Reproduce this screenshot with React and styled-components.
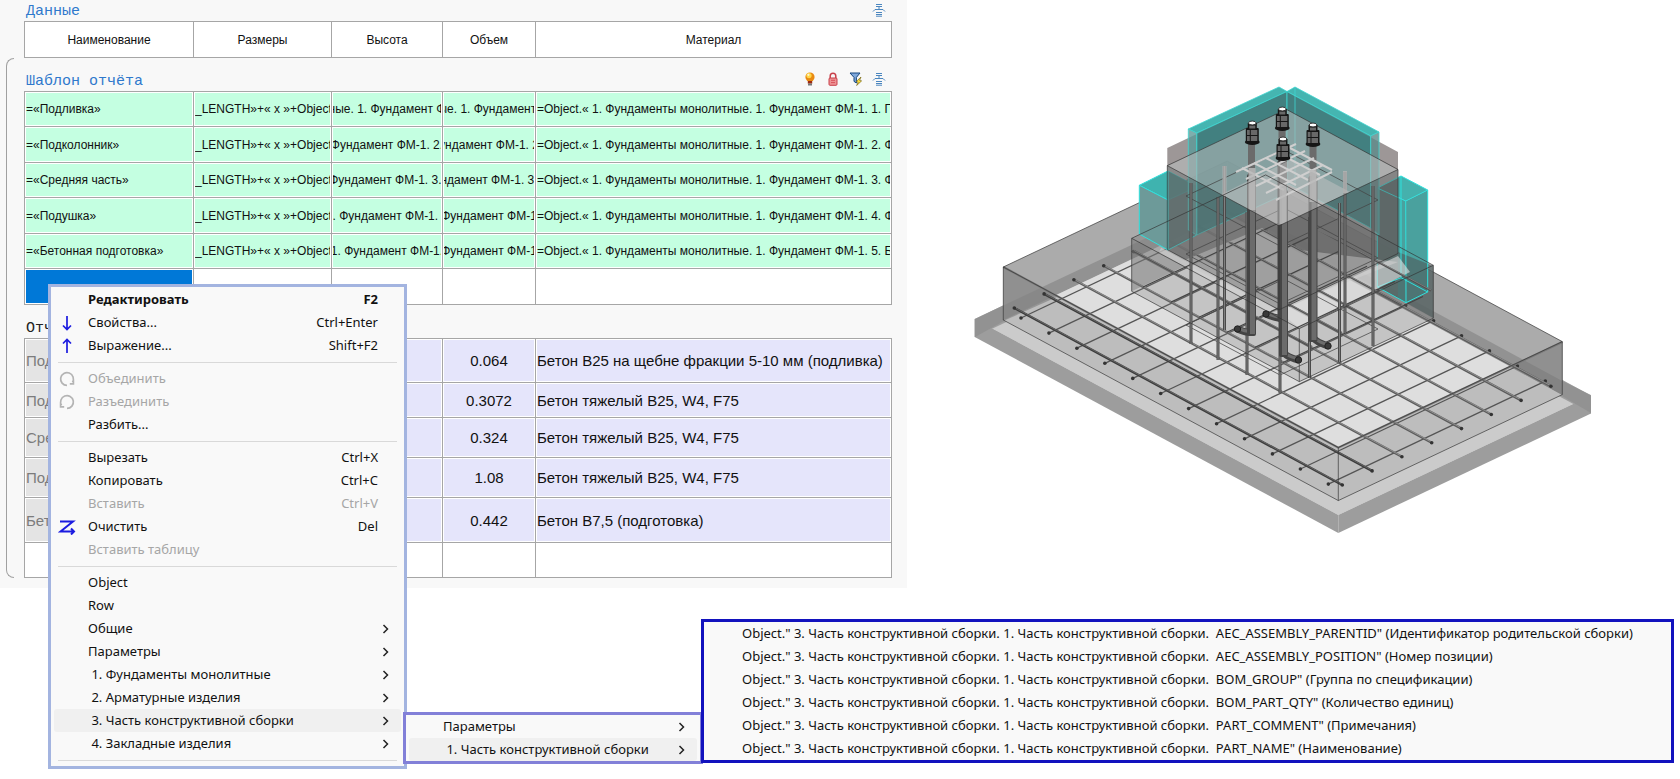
import React from 'react';
import styled, { createGlobalStyle } from 'styled-components';

const GlobalStyle = createGlobalStyle`
    body{
        margin: 0;
        background: #fff;
        font-family: "Liberation Sans", Arial, sans-serif;
    }
    *{
        box-sizing: border-box;
    }
`;

const LayoutPage = styled.main`
    position: relative;
    display: grid;
    grid-template-columns: 907fr 773fr;
    align-items: start;
    min-height: 100vh;
    overflow: hidden;
`;

const LayoutPanel = styled.section`
    background: #f8f8f8;
    padding: 0 15px 10px 6px;
`;

const LayoutSection = styled.div`
    padding-left: 18px;
`;

const LayoutGroup = styled.div`
    display: grid;
    grid-template-columns: 8px minmax(0, 1fr);
    column-gap: 10px;
`;

const Bracket = styled.div`
    border: 1px solid #a0a0a0;
    border-right: 0;
    border-radius: 8px 0 0 8px;
`;

const TitleRow = styled.header`
    display: flex;
    align-items: center;
    justify-content: space-between;
    height: ${p => (p.$first ? 21 : 22)}px;
    margin-top: ${p => (p.$first ? 0 : 11)}px;
    padding: 0 6px 0 2px;
`;

const Title = styled.h2`
    margin: 0;
    padding-top: 3px;
    font: 400 15px/18px "Liberation Mono", monospace;
    color: ${p => (p.$dark ? '#222' : '#2f78cc')};
`;

const Tools = styled.div`
    display: flex;
    gap: 9px;
    padding-bottom: 2px;
`;

const ToolButton = styled.button`
    display: block;
    width: 14px;
    height: 14px;
    padding: 0;
    border: 0;
    background: none;
    svg{
        display: block;
    }
`;

const Table = styled.table`
    width: 100%;
    table-layout: fixed;
    border-collapse: collapse;
    font-size: ${p => p.$size || 12}px;
    color: #111;
`;

const HeadCell = styled.th`
    height: 36px;
    padding: 0;
    border: 1px solid #a6a6a6;
    background: #fff;
    font-weight: 400;
`;

const fills = {
    formula: '#c4ffe1',
    value: '#e5e5fb',
    label: '#e4e4e4',
    empty: '#fff',
    selected: '#0078d7',
};

const Cell = styled.td`
    height: ${p => p.$height}px;
    padding: 0 1px;
    border: 1px solid #a6a6a6;
    background: ${p => fills[p.$kind]};
    box-shadow: inset 0 0 0 1px #fff;
    color: ${p => (p.$kind === 'label' ? '#7c7c7c' : 'inherit')};
`;

const CellText = styled.div`
    display: flex;
    justify-content: ${p => p.$align || 'flex-start'};
    overflow: hidden;
    white-space: pre;
`;

const LayoutScene = styled.section`
    padding: 70px 60px 0 53px;
    svg{
        display: block;
        width: 100%;
    }
`;

const Menu = styled.ul`
    position: absolute;
    margin: 0;
    padding: 0 3px;
    list-style: none;
    background: #f9f9f9;
    font: 13px/23px "Noto Sans", "Open Sans", sans-serif;
    color: #111;
`;

const ContextMenu = styled(Menu)`
    left: 48px;
    top: 284px;
    width: 359px;
    padding-top: 1px;
    padding-bottom: 1px;
    border: 3px solid #a3b4e0;
`;

const GroupMenu = styled(Menu)`
    left: 403px;
    top: 712px;
    width: 300px;
    border: 3px solid #8280d8;
`;

const PropertyMenu = styled(Menu)`
    left: 701px;
    right: 6px;
    top: 619px;
    border: 3px solid #1212be;
`;

const MenuItem = styled.button`
    display: grid;
    grid-template-columns: ${p => p.$lead || 34}px 1fr auto;
    align-items: center;
    width: 100%;
    height: 23px;
    padding: 0 ${p => (p.$arrow ? 11 : 23)}px 0 0;
    border: 0;
    border-radius: 3px;
    background: ${p => (p.$active ? '#f0f0f0' : 'none')};
    font: inherit;
    font-weight: ${p => (p.$bold ? 700 : 400)};
    color: inherit;
    text-align: left;
    white-space: pre;
    &:disabled{
        color: #a6a6a6;
    }
    svg{
        display: block;
    }
`;

const IconSlot = styled.span`
    padding-left: 4px;
`;

const Separator = styled.li`
    height: 10px;
    padding: 5px 4px 0;
    &:after{
        content: '';
        display: block;
        height: 1px;
        background: #d9d9d9;
    }
`;

const columns = ['Наименование', 'Размеры', 'Высота', 'Объем', 'Материал'];

const sizeText = '_LENGTH»+« x »+Object.«';
const materialText = '=Object.« 1. Фундаменты монолитные. 1. Фундамент ФМ-1. ';

const template = [
    ['=«Подливка»', 'ные. 1. Фундамент Ф', 'ые. 1. Фундамент ', '1. Подливка'],
    ['=«Подколонник»', 'Фундамент ФМ-1. 2.', 'ундамент ФМ-1. 2', '2. Фундамент'],
    ['=«Средняя часть»', 'Фундамент ФМ-1. 3. ', 'ндамент ФМ-1. 3.', '3. Фундамент'],
    ['=«Подушка»', '. Фундамент ФМ-1. ', 'Фундамент ФМ-1', '4. Фундамент'],
    ['=«Бетонная подготовка»', '1. Фундамент ФМ-1.', 'Фундамент ФМ-1', '5. Бетонная'],
];

const report = [
    { name: 'Подливка', volume: '0.064', material: 'Бетон B25 на щебне фракции 5-10 мм (подливка)', height: 44 },
    { name: 'Подколонник', volume: '0.3072', material: 'Бетон тяжелый B25, W4, F75', height: 35 },
    { name: 'Средняя часть', volume: '0.324', material: 'Бетон тяжелый B25, W4, F75', height: 40 },
    { name: 'Подушка', volume: '1.08', material: 'Бетон тяжелый B25, W4, F75', height: 40 },
    { name: 'Бетонная подготовка', volume: '0.442', material: 'Бетон B7,5 (подготовка)', height: 45 },
];

const menu = [
    { text: 'Редактировать', hint: 'F2', bold: true },
    { text: 'Свойства...', hint: 'Ctrl+Enter', icon: 'down' },
    { text: 'Выражение...', hint: 'Shift+F2', icon: 'up' },
    null,
    { text: 'Объединить', icon: 'merge', disabled: true },
    { text: 'Разъединить', icon: 'split', disabled: true },
    { text: 'Разбить...' },
    null,
    { text: 'Вырезать', hint: 'Ctrl+X' },
    { text: 'Копировать', hint: 'Ctrl+C' },
    { text: 'Вставить', hint: 'Ctrl+V', disabled: true },
    { text: 'Очистить', hint: 'Del', icon: 'clear' },
    { text: 'Вставить таблицу', disabled: true },
    null,
    { text: 'Object' },
    { text: 'Row' },
    { text: 'Общие', arrow: true },
    { text: 'Параметры', arrow: true },
    { text: ' 1. Фундаменты монолитные', arrow: true },
    { text: ' 2. Арматурные изделия', arrow: true },
    { text: ' 3. Часть конструктивной сборки', arrow: true, active: true },
    { text: ' 4. Закладные изделия', arrow: true },
    null,
];

const groupMenu = [
    { text: 'Параметры', arrow: true },
    { text: ' 1. Часть конструктивной сборки', arrow: true, active: true },
];

const propertyPrefix = 'Object." 3. Часть конструктивной сборки. 1. Часть конструктивной сборки.  ';
const properties = [
    'AEC_ASSEMBLY_PARENTID" (Идентификатор родительской сборки)',
    'AEC_ASSEMBLY_POSITION" (Номер позиции)',
    'BOM_GROUP" (Группа по спецификации)',
    'BOM_PART_QTY" (Количество единиц)',
    'PART_COMMENT" (Примечания)',
    'PART_NAME" (Наименование)',
];

const iconPaths = {
    down: 'M8 1v13M4 10.5l4 4 4-4',
    up: 'M8 15V2M4 5.5l4-4 4 4',
    merge: 'M8 14.4A6.4 6.4 0 1 1 13.5 11.3M14.4 9.2v3.6h-3.6',
    split: 'M8 14.4A6.4 6.4 0 1 0 2.5 11.3M1.6 9.2v3.6h3.6',
    clear: 'M1 2.5h13L1.5 12.5H15M12 9.5l3 3-3 3',
};

const MenuIcon = ({ name }) => (
    <svg width="18" height="16" viewBox="-1 0 18 16" fill="none" strokeWidth={ name === 'clear' ? 2 : 1.7 }
        stroke={ name === 'merge' || name === 'split' ? '#b4b4b4' : '#1c1ce0' }>
        <path d={ iconPaths[name] } />
    </svg>
);

const Chevron = () => (
    <svg width="8" height="12" viewBox="0 0 8 12" fill="none" stroke="#222" strokeWidth="1.5">
        <path d="M1.5 2l4 4-4 4" />
    </svg>
);

const CollapseIcon = () => (
    <svg width="14" height="14" viewBox="0 0 14 14" fill="none" stroke="#4b86bf">
        <path d="M4 1.5h6M4 3.5h6M7 4v2M1 8.5l2-2h8l2 2M4 9.5h6M4 11.5h6M4 13.2h6" />
    </svg>
);

const BulbIcon = () => (
    <svg width="14" height="14" viewBox="0 0 14 14">
        <circle cx="7" cy="5" r="4.6" fill="#e98a12" />
        <circle cx="6" cy="3.6" r="2.6" fill="#ffd84a" />
        <circle cx="5.4" cy="2.8" r="1.1" fill="#fff6cf" />
        <path d="M4.8 9h4.4v2.6H4.8z" fill="#9a2a12" />
        <path d="M5 11.6h4v1.9H5z" fill="#777" />
    </svg>
);

const LockIcon = () => (
    <svg width="14" height="14" viewBox="0 0 14 14">
        <path d="M4.2 7V4a2.8 2.8 0 0 1 5.6 0v3" fill="none" stroke="#c8404a" strokeWidth="1.5" />
        <rect x="3" y="6" width="8" height="7.3" rx="1" fill="#ee9294" stroke="#c8404a" />
        <path d="M5 8.3h4M5 10.6h4" stroke="#d8525a" />
    </svg>
);

const FilterIcon = () => (
    <svg width="14" height="14" viewBox="0 0 14 14">
        <path d="M1 1h10L7.4 5.4V11L5 9.4v-4z" fill="#7fa8dc" stroke="#17477f" />
        <path d="M12 5L7.2 9.6l2 .5-1.6 3.4 5-4.6-2-.5z" fill="#ffe23c" stroke="#76651a" strokeWidth=".7" />
    </svg>
);

const Columns = () => (
    <colgroup>
        <col width="169" />
        <col width="138" />
        <col width="111" />
        <col width="93" />
        <col />
    </colgroup>
);

const EmptyRow = ({ selected, height }) => (
    <tr>
        {columns.map((name, index) => (
            <Cell key={ name } $height={ height } $kind={ selected && index === 0 ? 'selected' : 'empty' } />
        ))}
    </tr>
);

const TemplateRow = ({ cells, height }) => {
    const [name, high, volume, material] = cells;

    return (
        <tr>
            <Cell $kind="formula" $height={ height }><CellText>{name}</CellText></Cell>
            <Cell $kind="formula"><CellText>{sizeText}</CellText></Cell>
            <Cell $kind="formula"><CellText $align="center">{high}</CellText></Cell>
            <Cell $kind="formula"><CellText $align="center">{volume}</CellText></Cell>
            <Cell $kind="formula"><CellText>{materialText + material}</CellText></Cell>
        </tr>
    )
}

const Item = ({ text, hint, icon, arrow, active, bold, disabled, lead }) => (
    <li>
        <MenuItem type="button" disabled={ disabled } $active={ active } $arrow={ arrow } $bold={ bold } $lead={ lead }>
            <IconSlot>{icon && <MenuIcon name={ icon } />}</IconSlot>
            <span>{text}</span>
            {arrow ? <Chevron /> : <span>{hint}</span>}
        </MenuItem>
    </li>
);

/* Scene geometry: a runs down-right, b runs up-right, heights go straight up */
const A = 0.539;
const B = 0.473;

const pts = list => list.map(p => p.join(',')).join(' ');

const makeBox = (x, y, a, b, h) => {
    const left = [x, y];
    const front = [x + a, y + a * A];
    const right = [x + a + b, y + a * A - b * B];
    const back = [x + b, y - b * B];
    const lower = p => [p[0], p[1] + h];
    return { left, front, right, back, lLeft: lower(left), lFront: lower(front), lRight: lower(right), lBack: lower(back) };
};

const slab = makeBox(974.7, 319, 363.6, 252.7, 18);
const pad = makeBox(1003.3, 267, 335, 224, 53);
const step = makeBox(1131.7, 238.3, 167.6, 134, 53);
const column = makeBox(1167.3, 165.6, 111.7, 119, 84);

const BoxBack = ({ box, fill, opacity }) => (
    <g fill={ fill } fillOpacity={ opacity }>
        <polygon points={ pts([box.left, box.back, box.lBack, box.lLeft]) } />
        <polygon points={ pts([box.back, box.right, box.lRight, box.lBack]) } />
    </g>
);

const BoxFront = ({ box, fill, opacity }) => (
    <g fill={ fill } fillOpacity={ opacity }>
        <polygon points={ pts([box.left, box.front, box.lFront, box.lLeft]) } />
        <polygon points={ pts([box.front, box.right, box.lRight, box.lFront]) } />
    </g>
);

const BoxEdges = ({ box }) => (
    <g fill="none" stroke="#333" strokeWidth=".8" strokeOpacity=".85">
        <polygon points={ pts([box.left, box.front, box.right, box.back]) } />
        <polyline points={ pts([box.left, box.lLeft, box.lFront, box.lRight, box.right]) } />
        <line x1={ box.front[0] } y1={ box.front[1] } x2={ box.lFront[0] } y2={ box.lFront[1] } />
    </g>
);

const range = n => Array.from({ length: n }, (_, i) => i);

const Bar = ({ x, y, dx, dy, width, color = '#4c4c4c', light, caps }) => (
    <g>
        <line x1={ x } y1={ y } x2={ x + dx } y2={ y + dy } stroke={ color } strokeWidth={ width } />
        {light && <line x1={ x } y1={ y - 0.5 } x2={ x + dx } y2={ y + dy - 0.5 } stroke={ light } strokeWidth=".7" />}
        {caps && <circle cx={ x } cy={ y } r="1.8" fill="#333" />}
        {caps && <circle cx={ x + dx } cy={ y + dy } r="1.8" fill="#333" />}
    </g>
);

const posts = [
    [1191, 183, 344], [1218, 197, 360], [1224.5, 166, 330], [1247, 212, 375], [1280, 232, 393],
    [1309.5, 217, 378], [1339.5, 203, 362], [1345, 172, 333], [1373, 186, 346],
];

const Bolt = ({ x, y, bottom, hook, drop }) => (
    <g>
        <path d={ `M${x} ${bottom - 6}q0 5 ${hook} ${drop}` } fill="none" stroke="#444" strokeWidth="7" />
        <path d={ `M${x} ${bottom - 7}q0 5 ${hook} ${drop}` } fill="none" stroke="#6c6c6c" strokeWidth="3" />
        <circle cx={ x + hook } cy={ bottom - 6 + drop } r="3.2" fill="#3a3a3a" stroke="#222" />
        <rect x={ x - 3.5 } y={ y + 8 } width="7" height="36" fill="#6b6b6b" />
        <rect x={ x - 4.5 } y={ y + 40 } width="9" height={ bottom - y - 40 } rx="2" fill="#454545" />
        <rect x={ x - 1.5 } y={ y + 40 } width="5" height={ bottom - y - 42 } fill="#6b6b6b" />
    </g>
);

const Nut = ({ x, y }) => (
    <g>
        <rect x={ x - 4.5 } y={ y - 11 } width="9" height="7" fill="#161616" />
        <rect x={ x - 6.5 } y={ y - 6 } width="13" height="14" rx="1" fill="#161616" />
        <ellipse cx={ x } cy={ y + 8 } rx="7.4" ry="3" fill="#161616" />
        <path d={ `M${x - 3} ${y - 8.5}h6v3h-6zM${x - 5.3} ${y - 4}h2.8v5h-2.8zM${x - 1.5} ${y - 4}h6.5v5h-6.5zM${x - 5.3} ${y + 2}h2.8v5h-2.8zM${x - 1.5} ${y + 2}h6.500v5h-6.500z` } fill="#686868" />
        <ellipse cx={ x } cy={ y - 11 } rx="3.8" ry="1.9" fill="#fff" stroke="#161616" strokeWidth=".8" />
    </g>
);

const Scene = () => (
    <svg viewBox="960 70 660 470" role="img" aria-label="Фундамент">
        <defs>
            <clipPath id="pad-top"><polygon points={ pts([pad.left, pad.front, pad.right, pad.back]) } /></clipPath>
            <clipPath id="column-top"><polygon points={ pts([column.left, column.front, column.right, column.back]) } /></clipPath>
            <clipPath id="floor"><path d="M1131 238L1180 262L1290 218L1433 285V320L1299 382L1131 292Z" /></clipPath>
        </defs>

        <polygon points={ pts([slab.left, slab.front, slab.right, slab.back]) } fill="#cbcbcb" />
        <BoxBack box={ slab } fill="#999" opacity=".9" />
        <polygon points={ pts([pad.lLeft, pad.lFront, pad.lRight, pad.lBack]) } fill="#bdbdbd" />
        <BoxFront box={ slab } fill="#9d9d9d" opacity="1" />
        <path d="M975 319L1004 305V321L975 337ZM1591 395L1562 381V396L1591 413Z" fill="#8b8b8b" fillOpacity=".6" />

        <BoxBack box={ pad } fill="#ababab" opacity="1" />
        <polygon points={ pts([[1003.3, 305.5], [1227.3, 199.7], [1562.3, 381], [1562.3, 395], [1227.3, 214], [1003.3, 320]]) } fill="#929292" />
        <polygon points={ pts([pad.lLeft, pad.lFront, pad.lRight, pad.lBack]) } fill="#dedede" clipPath="url(#pad-top)" />
        <path d="M1003.3 267L1058 296.5L1003.3 321Z" fill="#858585" fillOpacity=".7" />
        <path d="M1562.3 342L1510 366L1562.3 395Z" fill="#757575" fillOpacity=".5" />

        <g>
            {range(12).map(i => (
                <Bar key={ i } x={ 1021 + i * 27.94 } y={ 318 + i * 15.1 } dx={ 217 } dy={ -103 } width={ 1.3 } color="#555" caps />
            ))}
            {range(8).map(i => (
                <Bar key={ i } x={ 1014.3 + i * 29.8 } y={ 308 - i * 14.1 } dx={ 328 } dy={ 177 } width={ 2.4 }
                    color={ i < 2 ? '#3c3c3c' : '#5c5c5c' } light={ i < 2 ? '#777' : '#a5a5a5' } caps />
            ))}
        </g>
        <polyline points={ pts([[1003.3, 267], pad.front, [1562.3, 342]]) } fill="none" stroke="#777" strokeWidth="2" />
        <BoxEdges box={ pad } />

        <BoxBack box={ step } fill="#777" opacity=".45" />
        <BoxFront box={ step } fill="#777" opacity=".25" />
        <path d="M1131.7 238.3L1265.7 175L1433.3 265.6L1299.3 329Z" fill="#9a9a9a" fillOpacity=".3" />

        <path d="M1167.3 148L1286 91.5L1398 152V170L1286 110L1167.3 166Z" fill="#9d9797" />
        <polygon points={ pts([column.left, column.back, column.right, column.lRight, column.lFront, column.lLeft]) } fill="#6b6b6b" fillOpacity=".62" />

        <g stroke="#2ee0dc" strokeWidth="1">
            <path d="M1139.3 185.3L1168 171L1190 183L1190 190L1168 200Z" fill="#3fb3af" />
            <path d="M1139.3 185.3L1168 200V250L1139.3 234Z" fill="#6d9a99" />
            <path d="M1168 171V250L1196.7 235V186" fill="#4f6f6f" fillOpacity=".75" />
            <path d="M1398 177.5L1401 176L1427.7 190L1405.7 201L1398 197Z" fill="#45b1ad" stroke="none" />
            <path d="M1398 197L1405.7 201L1427.7 190V292L1406 302.7L1398 298Z" fill="#4aa19e" stroke="none" />
            <path d="M1377.3 188L1398 178V298L1377.3 287Z" fill="#536867" fillOpacity=".9" stroke="none" />
            <path d="M1398 252L1433.3 266V318L1406 302.7L1398 298Z" fill="#4f5e5e" fillOpacity=".65" stroke="none" />
            <path d="M1377.3 188L1401 176L1427.7 190L1405.7 201ZM1405.7 201L1406 302.7L1427.7 292V190M1377.3 188V287L1406 302.7M1377.3 287L1401 277.7V176M1401 277.7L1427.7 292" fill="none" />
        </g>

        <g stroke="#3fd5d1" strokeWidth=".8">
            <path d="M1188.3 129L1279 87L1287 91.5L1196.7 133Z" fill="#45b5b1" />
            <path d="M1379 132L1295 87L1287 91.5L1370.7 136Z" fill="#45b5b1" />
            <path d="M1196.7 133L1287 91.5V193L1196.7 235Z" fill="#2c7b7a" fillOpacity=".8" />
            <path d="M1188.3 129L1196.7 133V235L1188.3 230Z" fill="#5e9a99" fillOpacity=".8" />
            <path d="M1370.7 136L1287 91.5V183L1370.7 228Z" fill="#2c7b7a" fillOpacity=".8" />
            <path d="M1370.7 136L1379 132V235L1370.7 228Z" fill="#5e8a89" fillOpacity=".8" />
            <path d="M1295 87V186" fill="none" />
        </g>

        <polygon points={ pts([column.left, column.front, column.lFront, column.lLeft]) } fill="#6c6c6c" fillOpacity=".45" />
        <polygon points={ pts([column.front, column.right, column.lRight, column.lFront]) } fill="#626262" fillOpacity=".45" />
        <polygon points={ pts([column.left, column.front, column.right, column.back]) } fill="#b6b6b6" fillOpacity=".58" />

        {/* lit floor seen through the column and the step */}
        <path d="M1180 262L1262 228L1300 250L1398 262L1279 309Z" fill="#b4b4b4" fillOpacity=".6" />
        <path d="M1279 312L1340 283L1398 256L1410 272L1299.3 328Z" fill="#e2e2e2" fillOpacity=".6" />
        <path d="M1160 250L1286 318" stroke="#d2d2d2" strokeWidth="5" strokeOpacity=".6" />

        {/* rebar behind the column faces */}
        <g clipPath="url(#floor)">
            {range(6).map(i => (
                <Bar key={ i } x={ 1143 + i * 28 } y={ 287 + i * 15.1 } dx={ 140 } dy={ -66 } width={ 1.2 } color="#444" />
            ))}
            {range(5).map(i => (
                <Bar key={ i } x={ 1134 + i * 29.8 } y={ 251 - i * 14.1 } dx={ 178 } dy={ 96 } width={ 2 } color="#505050" light="#8c8c8c" />
            ))}
        </g>
        {[196, 254, 325].map(y => (
            <path key={ y } d={ `M1186 ${y}L1284 ${y - 46}L1378 ${y + 4}L1280 ${y + 50}Z` }
                fill="none" stroke="#444" strokeWidth="1" strokeOpacity=".75" />
        ))}
        {posts.map(([x, y1, y2]) => (
            <g key={ x }>
                <line x1={ x } y1={ y1 } x2={ x } y2={ y2 } stroke="#4a4a4a" strokeWidth="3" />
                <line x1={ x } y1={ y1 } x2={ x } y2={ y2 } stroke="#808080" strokeWidth="1" />
            </g>
        ))}

        <Bolt x={ 1282 } y={ 120 } bottom={ 322 } hook={ -16 } drop={ -2 } />
        <Bolt x={ 1251.5 } y={ 134 } bottom={ 336 } hook={ -14 } drop={ -1 } />
        <Bolt x={ 1313 } y={ 136 } bottom={ 342 } hook={ 15 } drop={ 10 } />
        <Bolt x={ 1283.5 } y={ 150 } bottom={ 357 } hook={ 15 } drop={ 9 } />

        <g clipPath="url(#column-top)">
            <polygon points="1220,195 1290,160 1350,192 1279,226" fill="#c4c4c4" fillOpacity=".5" />
            {range(5).map(i => (
                <g key={ i } stroke="#cfcfcf" strokeWidth="2">
                    <line x1={ 1236 + i * 10 } y1={ 172 + i * 7 } x2={ 1296 + i * 9 } y2={ 144 + i * 7 } />
                    <line x1={ 1242 + i * 12 } y1={ 168 - i * 5 } x2={ 1284 + i * 12 } y2={ 190 - i * 5 } />
                </g>
            ))}
            <path d="M1252 168v42M1283 184v40M1313 170v32" stroke="#bababa" strokeWidth="7" strokeOpacity=".85" />
            <path d="M1224.5 166v30M1345 171v22" stroke="#b5b5b5" strokeWidth="4" strokeOpacity=".8" />
        </g>

        <BoxEdges box={ step } />
        <BoxEdges box={ column } />
        <Nut x={ 1282.3 } y={ 120 } />
        <Nut x={ 1252.3 } y={ 134 } />
        <Nut x={ 1313 } y={ 136 } />
        <Nut x={ 1283 } y={ 150 } />
    </svg>
);

const App = () => (
    <>
        <GlobalStyle />
        <LayoutPage>
            <LayoutPanel>
                <LayoutSection>
                    <TitleRow $first>
                        <Title>Данные</Title>
                        <Tools>
                            <ToolButton type="button" aria-label="Свернуть"><CollapseIcon /></ToolButton>
                        </Tools>
                    </TitleRow>
                    <Table>
                        <Columns />
                        <thead>
                            <tr>
                                {columns.map(name => <HeadCell key={ name } scope="col">{name}</HeadCell>)}
                            </tr>
                        </thead>
                    </Table>
                </LayoutSection>

                <LayoutGroup>
                    <Bracket />
                    <div>
                        <TitleRow>
                            <Title>Шаблон отчёта</Title>
                            <Tools>
                                <ToolButton type="button" aria-label="Подсветка"><BulbIcon /></ToolButton>
                                <ToolButton type="button" aria-label="Блокировка"><LockIcon /></ToolButton>
                                <ToolButton type="button" aria-label="Фильтр"><FilterIcon /></ToolButton>
                                <ToolButton type="button" aria-label="Свернуть"><CollapseIcon /></ToolButton>
                            </Tools>
                        </TitleRow>
                        <Table>
                            <Columns />
                            <tbody>
                                {template.map((cells, index) => (
                                    <TemplateRow key={ cells[0] } cells={ cells } height={ index % 2 ? 36 : 35 } />
                                ))}
                                <EmptyRow selected height={ 36 } />
                            </tbody>
                        </Table>
                        <TitleRow>
                            <Title $dark>Отчёт</Title>
                        </TitleRow>
                        <Table $size={ 15 }>
                            <Columns />
                            <tbody>
                                {report.map(({ name, volume, material, height }) => (
                                    <tr key={ name }>
                                        <Cell $kind="label" $height={ height }><CellText>{name}</CellText></Cell>
                                        <Cell $kind="value" />
                                        <Cell $kind="value" />
                                        <Cell $kind="value"><CellText $align="center">{volume}</CellText></Cell>
                                        <Cell $kind="value"><CellText>{material}</CellText></Cell>
                                    </tr>
                                ))}
                                <EmptyRow height={ 35 } />
                            </tbody>
                        </Table>
                    </div>
                </LayoutGroup>
            </LayoutPanel>

            <LayoutScene>
                <Scene />
            </LayoutScene>

            <ContextMenu>
                {menu.map((item, index) => (item ? <Item key={ index } { ...item } /> : <Separator key={ index } />))}
            </ContextMenu>
            <GroupMenu>
                {groupMenu.map(item => <Item key={ item.text } { ...item } />)}
            </GroupMenu>
            <PropertyMenu>
                {properties.map(text => <Item key={ text } text={ propertyPrefix + text } lead={ 35 } />)}
            </PropertyMenu>
        </LayoutPage>
    </>
);

export default App;
